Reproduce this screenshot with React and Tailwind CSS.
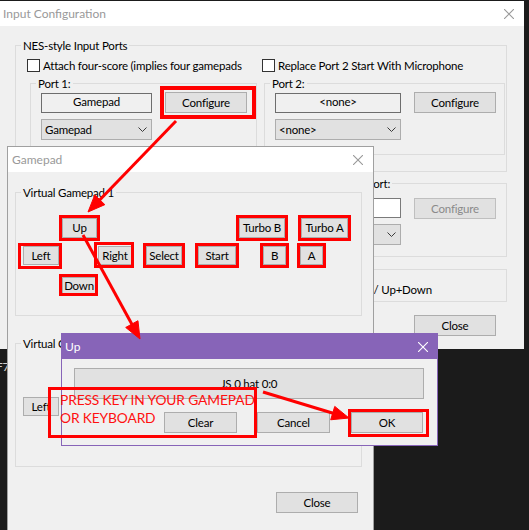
import React from 'react';

// annotation arrows in page coordinates: [from, tip]
const ARROWS = [
  [[176, 121], [88, 212]],
  [[83, 235], [140, 339]],
  [[263, 392], [349, 418]],
];

function arrowParts([x1, y1], [x2, y2], len = 17, half = 7) {
  const d = Math.hypot(x2 - x1, y2 - y1);
  const ux = (x2 - x1) / d;
  const uy = (y2 - y1) / d;
  const bx = x2 - ux * len;
  const by = y2 - uy * len;
  return {
    end: [bx + ux * 3, by + uy * 3],
    head: `${x2},${y2} ${bx - uy * half},${by + ux * half} ${bx + uy * half},${by - ux * half}`,
  };
}

function CloseX() {
  return (
    <svg width="10" height="10" viewBox="0 0 10 10">
      <path d="M0 0L10 10M10 0L0 10" stroke="currentColor" strokeWidth="1.1" />
    </svg>
  );
}

function Group({ label, className = '', labelClass = 'left-[5px]', children }) {
  return (
    <div className={`relative border border-[#dcdcdc] ${className}`}>
      {label && (
        <span className={`absolute top-[-8px] whitespace-nowrap bg-[#f0f0f0] px-[2px] leading-[15px] ${labelClass}`}>
          {label}
        </span>
      )}
      {children}
    </div>
  );
}

function Btn({ children, className = '' }) {
  return (
    <div className={`flex items-center justify-center whitespace-nowrap border border-[#adadad] bg-[#e1e1e1] ${className}`}>
      {children}
    </div>
  );
}

// red annotation frame around a control
function Mark({ children, className = '', box = 'inset-[-3px] border-[3px]' }) {
  return (
    <div className={`relative flex ${className}`}>
      {children}
      <span className={`absolute border-[#ff0000] ${box}`} />
    </div>
  );
}

function Combo({ children, className = '' }) {
  return (
    <div className={`flex items-center justify-between border border-[#adadad] bg-[#e1e1e1] pl-[3px] pr-[4px] ${className}`}>
      <span>{children}</span>
      <svg width="9" height="5" viewBox="0 0 9 5">
        <path d="M0.5 0.5L4.5 4.5L8.5 0.5" fill="none" stroke="#3a3a3a" />
      </svg>
    </div>
  );
}

function Check() {
  return <span className="h-[13px] w-[13px] shrink-0 border border-[#333] bg-white" />;
}

function InputConfig() {
  return (
    <div className="absolute left-0 top-[1px] h-[348px] w-[524px] bg-[#f0f0f0]">
      <div className="flex h-[25px] items-center justify-between bg-white pl-[3px] pr-[10px] text-[#999]">
        <span className="text-[12px] tracking-normal">Input Configuration</span>
        <CloseX />
      </div>
      <div className="pl-[15px]">
        <Group label="NES-style Input Ports" className="mt-[19px] h-[127px] w-[492px]">
          <div className="ml-[11px] mt-[13px] flex items-center whitespace-nowrap">
            <div className="flex w-[235px] items-center gap-[3px]">
              <Check />
              <span>Attach four-score (implies four gamepads</span>
            </div>
            <div className="flex items-center gap-[3px]">
              <Check />
              <span>Replace Port 2 Start With Microphone</span>
            </div>
          </div>
          <div className="ml-[14px] mt-[11px] flex gap-[7px]">
            <Group label="Port 1:" className="h-[72px] w-[227px]">
              <div className="ml-[10px] mt-[8px] flex items-start">
                <div className="mt-[1px] flex h-[20px] w-[111px] items-center justify-center border border-[#6d6d6d] pb-[2px]">
                  Gamepad
                </div>
                <Mark
                  className="ml-[13px] h-[21px] w-[82px]"
                  box="left-[-5px] right-[-9px] top-[-6px] bottom-[-6px] border-[4px]"
                >
                  <Btn className="flex-1">Configure</Btn>
                </Mark>
              </div>
              <Combo className="ml-[10px] mt-[6px] h-[21px] w-[111px]">Gamepad</Combo>
            </Group>
            <Group label="Port 2:" className="h-[72px] w-[241px]">
              <div className="ml-[10px] mt-[8px] flex items-start">
                <div className="mt-[1px] flex h-[20px] w-[126px] items-center justify-center border border-[#6d6d6d] pb-[2px]">
                  &lt;none&gt;
                </div>
                <Btn className="ml-[13px] h-[21px] w-[82px]">Configure</Btn>
              </div>
              <Combo className="ml-[10px] mt-[6px] h-[21px] w-[126px]">&lt;none&gt;</Combo>
            </Group>
          </div>
        </Group>

        <Group
          label="Famicom Expansion Port:"
          labelClass="left-[10px]"
          className="ml-[240px] mt-[11px] h-[74px] w-[252px]"
        >
          <div className="ml-[19px] mt-[14px] flex items-start">
            <div className="h-[20px] w-[126px] border border-[#7a7a7a] bg-white" />
            <Btn className="ml-[13px] h-[21px] w-[82px] border-[#bfbfbf] bg-[#cccccc] text-[#8a8a8a]">Configure</Btn>
          </div>
          <Combo className="ml-[19px] mt-[5px] h-[21px] w-[126px]" />
        </Group>

        <Group className="mt-[12px] h-[33px] w-[492px]">
          <div className="ml-[258px] mt-[13px] flex items-center gap-[3px] whitespace-nowrap">
            <Check />
            <span>Allow Left+Right / Up+Down</span>
          </div>
        </Group>

        <Btn className="ml-[399px] mt-[13px] h-[21px] w-[82px]">Close</Btn>
      </div>
    </div>
  );
}

function GamepadWindow() {
  return (
    <div className="absolute left-[7px] top-[146px] h-[400px] w-[367px] border border-[#a0a0a0] bg-[#f0f0f0]">
      <div className="flex h-[25px] items-center justify-between bg-white pl-[4px] pr-[10px] text-[#999]">
        <span className="text-[12px] tracking-normal">Gamepad</span>
        <CloseX />
      </div>
      <div className="pl-[7px]">
        <Group label="Virtual Gamepad 1" className="mt-[20px] h-[124px] w-[347px]">
          <div className="mt-[25px] flex h-[20px]">
            <Mark className="ml-[46px] w-[35px]"><Btn className="flex-1">Up</Btn></Mark>
            <Mark className="ml-[142px] w-[46px]"><Btn className="flex-1">Turbo B</Btn></Mark>
            <Mark className="ml-[16px] w-[47px]"><Btn className="flex-1">Turbo A</Btn></Mark>
          </div>
          <div className="mt-[8px] flex h-[19px]">
            <Mark className="ml-[7px] w-[36px]" box="left-[-5px] right-[-3px] top-[-3px] bottom-[-4px] border-[3px]">
              <Btn className="flex-1">Left</Btn>
            </Mark>
            <Mark className="ml-[39px] w-[34px]" box="left-[-4px] right-[-2px] top-[-4px] bottom-[-3px] border-[3px]">
              <Btn className="flex-1">Right</Btn>
            </Mark>
            <Mark className="ml-[14px] w-[36px]"><Btn className="flex-1">Select</Btn></Mark>
            <Mark className="ml-[16px] w-[38px]"><Btn className="flex-1">Start</Btn></Mark>
            <Mark className="ml-[27px] w-[23px]"><Btn className="flex-1">B</Btn></Mark>
            <Mark className="ml-[14px] w-[23px]"><Btn className="flex-1">A</Btn></Mark>
          </div>
          <div className="mt-[12px] flex h-[18px]">
            <Mark className="ml-[46px] w-[34px]" box="left-[-3px] right-[-2px] top-[-3px] bottom-[-1px] border-[3px]">
              <Btn className="flex-1">Down</Btn>
            </Mark>
          </div>
        </Group>

        <Group label="Virtual Gamepad 2" className="mt-[27px] h-[124px] w-[347px]">
          <Btn className="ml-[7px] mt-[53px] h-[19px] w-[36px]">Left</Btn>
        </Group>

        <Btn className="ml-[261px] mt-[25px] h-[21px] w-[82px]">Close</Btn>
      </div>
    </div>
  );
}

function KeyDialog() {
  return (
    <div className="absolute left-[61px] top-[333px] h-[113px] w-[377px] border border-[#8764b8] bg-[#f0f0f0]">
      <div className="flex h-[25px] items-center justify-between bg-[#8764b8] pl-[3px] pr-[9px] text-white">
        <span className="text-[12px] tracking-normal">Up</span>
        <CloseX />
      </div>
      <Btn className="ml-[12px] mt-[9px] h-[31px] w-[350px]">JS 0 hat 0:0</Btn>
      <div className="mt-[13px] flex h-[21px]">
        <Btn className="ml-[102px] w-[73px]">Clear</Btn>
        <Btn className="ml-[20px] w-[73px]">Cancel</Btn>
        <Mark className="ml-[21px] w-[72px]" box="left-[-3px] right-[-6px] top-[-3px] bottom-[-4px] border-[3px]">
          <Btn className="flex-1">OK</Btn>
        </Mark>
      </div>
    </div>
  );
}

export default function App() {
  return (
    <div className="relative h-[530px] w-[529px] overflow-hidden bg-[#1b1b1b] font-['Lato',sans-serif] text-[11.5px] leading-none tracking-[-0.2px] text-black">
      <InputConfig />
      <span className="absolute left-[-4px] top-[361px] text-[12px] text-[#cfcfcf]">F7</span>
      <GamepadWindow />
      <KeyDialog />

      {/* annotation text box */}
      <div className="absolute left-[48px] top-[387px] h-[51px] w-[209px] whitespace-nowrap border-[3px] border-[#ff0000] pl-[9px] pt-[1px] text-[13.8px] leading-[18px] tracking-[-0.15px] text-[#ff1010]">
        PRESS KEY IN YOUR GAMEPAD
        <br />
        OR KEYBOARD
      </div>

      <svg className="pointer-events-none absolute left-0 top-0" width="529" height="530">
        {ARROWS.map(([from, to], i) => {
          const { end, head } = arrowParts(from, to);
          return (
            <g key={i} fill="#ff0000" stroke="#ff0000">
              <line x1={from[0]} y1={from[1]} x2={end[0]} y2={end[1]} strokeWidth="3" />
              <polygon points={head} strokeWidth="1" />
            </g>
          );
        })}
      </svg>
    </div>
  );
}
